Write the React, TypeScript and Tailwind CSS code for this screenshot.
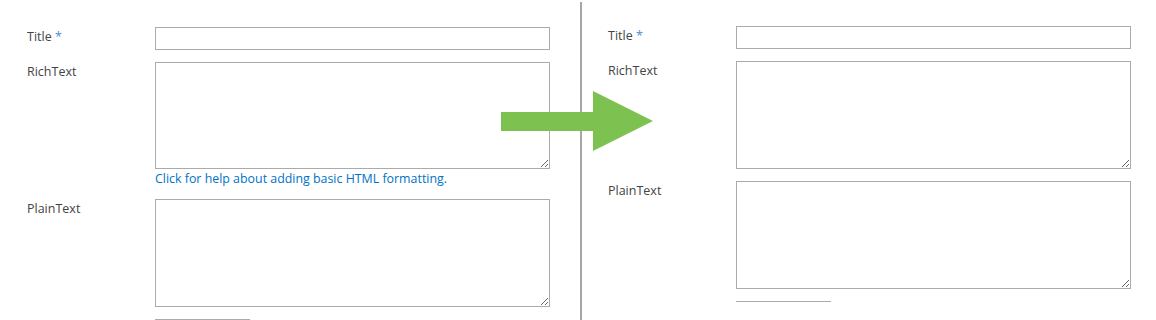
import React from "react"

const font = { fontFamily: '"Segoe UI", "Open Sans", "Noto Sans", sans-serif' }

function Label({ text, required }: { text: string; required?: boolean }) {
  return (
    <div className="w-[128px] shrink-0 pt-[1px] text-[12.5px] leading-[17px] text-[#444444]">
      {text}
      {required && <span className="text-[#4f8fd6]"> *</span>}
    </div>
  )
}

const boxCls = "block w-[395px] border border-[#ababab] bg-white outline-none"

function Form({ withHelp }: { withHelp: boolean }) {
  return (
    <div className="flex flex-col">
      <div className="flex">
        <Label text="Title" required />
        <input type="text" className={`${boxCls} h-[23px]`} />
      </div>

      <div className="mt-[12px] flex">
        <Label text="RichText" />
        <div className="flex flex-col">
          <textarea className={`${boxCls} ${withHelp ? "h-[107px]" : "h-[108px]"}`} />
          {withHelp && (
            <a className="mt-[1px] text-[12.4px] leading-[18px] text-[#0072c6] cursor-pointer">
              Click for help about adding basic HTML formatting.
            </a>
          )}
        </div>
      </div>

      <div className={`${withHelp ? "mt-[11px]" : "mt-[12px]"} flex`}>
        <Label text="PlainText" />
        <textarea className={`${boxCls} h-[108px]`} />
      </div>

      {/* top edge of the next row, cut off by the viewport */}
      <div className="mt-[12px] ml-[128px] h-px w-[95px] bg-[#ababab]" />
    </div>
  )
}

export default function App() {
  return (
    <div className="relative flex h-[320px] w-[1156px] overflow-hidden bg-white" style={font}>
      <div className="w-[580px] shrink-0 pl-[27px] pt-[27px]">
        <Form withHelp />
      </div>

      <div className="mt-[2px] w-[2px] shrink-0 bg-[#a6a6a6]" />

      <div className="flex-1 pl-[26px] pt-[26px]">
        <Form withHelp={false} />
      </div>

      {/* green arrow over the divider */}
      <svg
        className="absolute left-[500px] top-[90px]"
        width="154"
        height="62"
        viewBox="0 0 154 62"
      >
        <polygon
          points="1,22 93,22 93,1 153,31 93,61 93,41 1,41"
          fill="#7dc251"
        />
      </svg>
    </div>
  )
}
